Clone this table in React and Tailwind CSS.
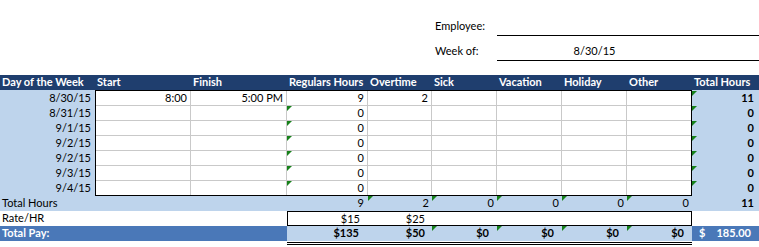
import React from "react";

// sheet column widths: Day, Start, Finish, Regulars, Overtime, Sick, Vacation, Holiday, Other, Total
const COLS = "grid grid-cols-[95px_96px_96px_81px_64px_65px_65px_65px_65px_67px]";

const headers = ["Day of the Week", "Start", "Finish", "Regulars Hours", "Overtime", "Sick", "Vacation", "Holiday", "Other", "Total Hours"];

const rows = [
    { day: "8/30/15", start: "8:00", finish: "5:00 PM", reg: "9", ot: "2", total: "11" },
    { day: "8/31/15", reg: "0", total: "0" },
    { day: "9/1/15", reg: "0", total: "0" },
    { day: "9/2/15", reg: "0", total: "0" },
    { day: "9/2/15", reg: "0", total: "0" },
    { day: "9/3/15", reg: "0", total: "0" },
    { day: "9/4/15", reg: "0", total: "0" },
];

// little green error marker in the top-left of a cell
const Flag = () => (
    <span className="absolute left-0 top-0 w-0 h-0 border-t-[5px] border-r-[5px] border-t-[#17811a] border-r-transparent" />
);

const App = () => {
    return (
        <div className="w-[759px] h-[247px] bg-white text-black text-[11px] leading-[14px] overflow-hidden" style={{ fontFamily: "Lato, 'Open Sans', sans-serif" }}>
            {/* Employee / week */}
            <div className="pt-[16px] h-[75px]">
                <div className={`${COLS} h-[20px]`}>
                    <div className="col-start-6 pl-[3px] flex items-center">Employee:</div>
                    <div className="col-span-4 border-b border-black"></div>
                </div>
                <div className={`${COLS} h-[20px] mt-[5px]`}>
                    <div className="col-start-6 pl-[3px] flex items-center">Week of:</div>
                    <div className="col-span-4 border-b border-black flex items-center">
                        <div className="w-[195px] text-center">8/30/15</div>
                    </div>
                </div>
            </div>

            {/* Header row */}
            <div className={`${COLS} h-[15px] bg-[#1f3e6e] text-white font-bold`}>
                {headers.map((h) => (
                    <div key={h} className="pl-[2px] whitespace-nowrap overflow-hidden">{h}</div>
                ))}
            </div>

            {/* Daily rows */}
            <div className="flex">
                <div className="w-[95px] bg-[#bed4ec] pt-[1px]">
                    {rows.map((r, i) => (
                        <div key={i} className="h-[15px] pr-[4px] text-right">{r.day}</div>
                    ))}
                </div>
                <div className="w-[597px] border border-black">
                    <div className="grid grid-cols-[95px_96px_81px_64px_65px_65px_65px_64px]">
                        {rows.map((r, i) => {
                            const last = i === rows.length - 1;
                            const cell = `relative pr-[3px] text-right ${last ? "h-[14px]" : "h-[15px] border-b border-[#c9c9c9]"}`;
                            return (
                                <React.Fragment key={i}>
                                    <div className={`${cell} border-r border-r-[#c9c9c9]`}>{r.start}</div>
                                    <div className={`${cell} border-r border-r-[#c9c9c9]`}>{r.finish}</div>
                                    <div className={`${cell} border-r border-r-[#c9c9c9]`}>
                                        {i > 0 && <Flag />}
                                        {r.reg}
                                    </div>
                                    <div className={`${cell} border-r border-r-[#c9c9c9]`}>{r.ot}</div>
                                    <div className={`${cell} border-r border-r-[#c9c9c9]`}></div>
                                    <div className={`${cell} border-r border-r-[#c9c9c9]`}></div>
                                    <div className={`${cell} border-r border-r-[#c9c9c9]`}></div>
                                    <div className={cell}></div>
                                </React.Fragment>
                            );
                        })}
                    </div>
                </div>
                <div className="w-[67px] bg-[#bed4ec] pt-[1px] font-bold">
                    {rows.map((r, i) => (
                        <div key={i} className="relative h-[15px] pr-[5px] text-right">
                            <Flag />
                            {r.total}
                        </div>
                    ))}
                </div>
            </div>

            {/* Total Hours */}
            <div className={`${COLS} h-[15px] bg-[#bed4ec]`}>
                <div className="col-span-3 pl-[2px]">Total Hours</div>
                <div className="pr-[4px] text-right">9</div>
                <div className="relative pr-[3px] text-right"><Flag />2</div>
                <div className="relative pr-[3px] text-right"><Flag />0</div>
                <div className="relative pr-[3px] text-right"><Flag />0</div>
                <div className="relative pr-[3px] text-right"><Flag />0</div>
                <div className="relative pr-[3px] text-right"><Flag />0</div>
                <div className="pr-[5px] text-right font-bold">11</div>
            </div>

            {/* Rate/HR */}
            <div className={`${COLS} h-[15px]`}>
                <div className="col-span-3 pl-[2px]">Rate/HR</div>
                <div className="col-span-6 border border-black grid grid-cols-[80px_64px_1fr] leading-[13px]">
                    <div className="pr-[8px] text-right">$15</div>
                    <div className="pr-[7px] text-right">$25</div>
                    <div></div>
                </div>
                <div></div>
            </div>

            {/* Total Pay */}
            <div className={`${COLS} h-[15px] font-bold`}>
                <div className="col-span-3 pl-[2px] bg-[#4a78b8] text-white">Total Pay:</div>
                <div className="bg-[#bed4ec] pr-[9px] text-right">$135</div>
                <div className="bg-[#bed4ec] pr-[7px] text-right">$50</div>
                <div className="relative bg-[#bed4ec] pr-[8px] text-right"><Flag />$0</div>
                <div className="relative bg-[#bed4ec] pr-[8px] text-right"><Flag />$0</div>
                <div className="relative bg-[#bed4ec] pr-[8px] text-right"><Flag />$0</div>
                <div className="relative bg-[#bed4ec] pr-[8px] text-right"><Flag />$0</div>
                <div className="bg-[#4a78b8] text-white flex justify-between pl-[7px] pr-[8px]">
                    <span>$</span>
                    <span>185.00</span>
                </div>
            </div>
            <div className={`${COLS}`}>
                <div className="col-start-4 col-span-6 h-[4px] border-b-[3px] border-double border-black"></div>
            </div>
        </div>
    );
};

export default App;
